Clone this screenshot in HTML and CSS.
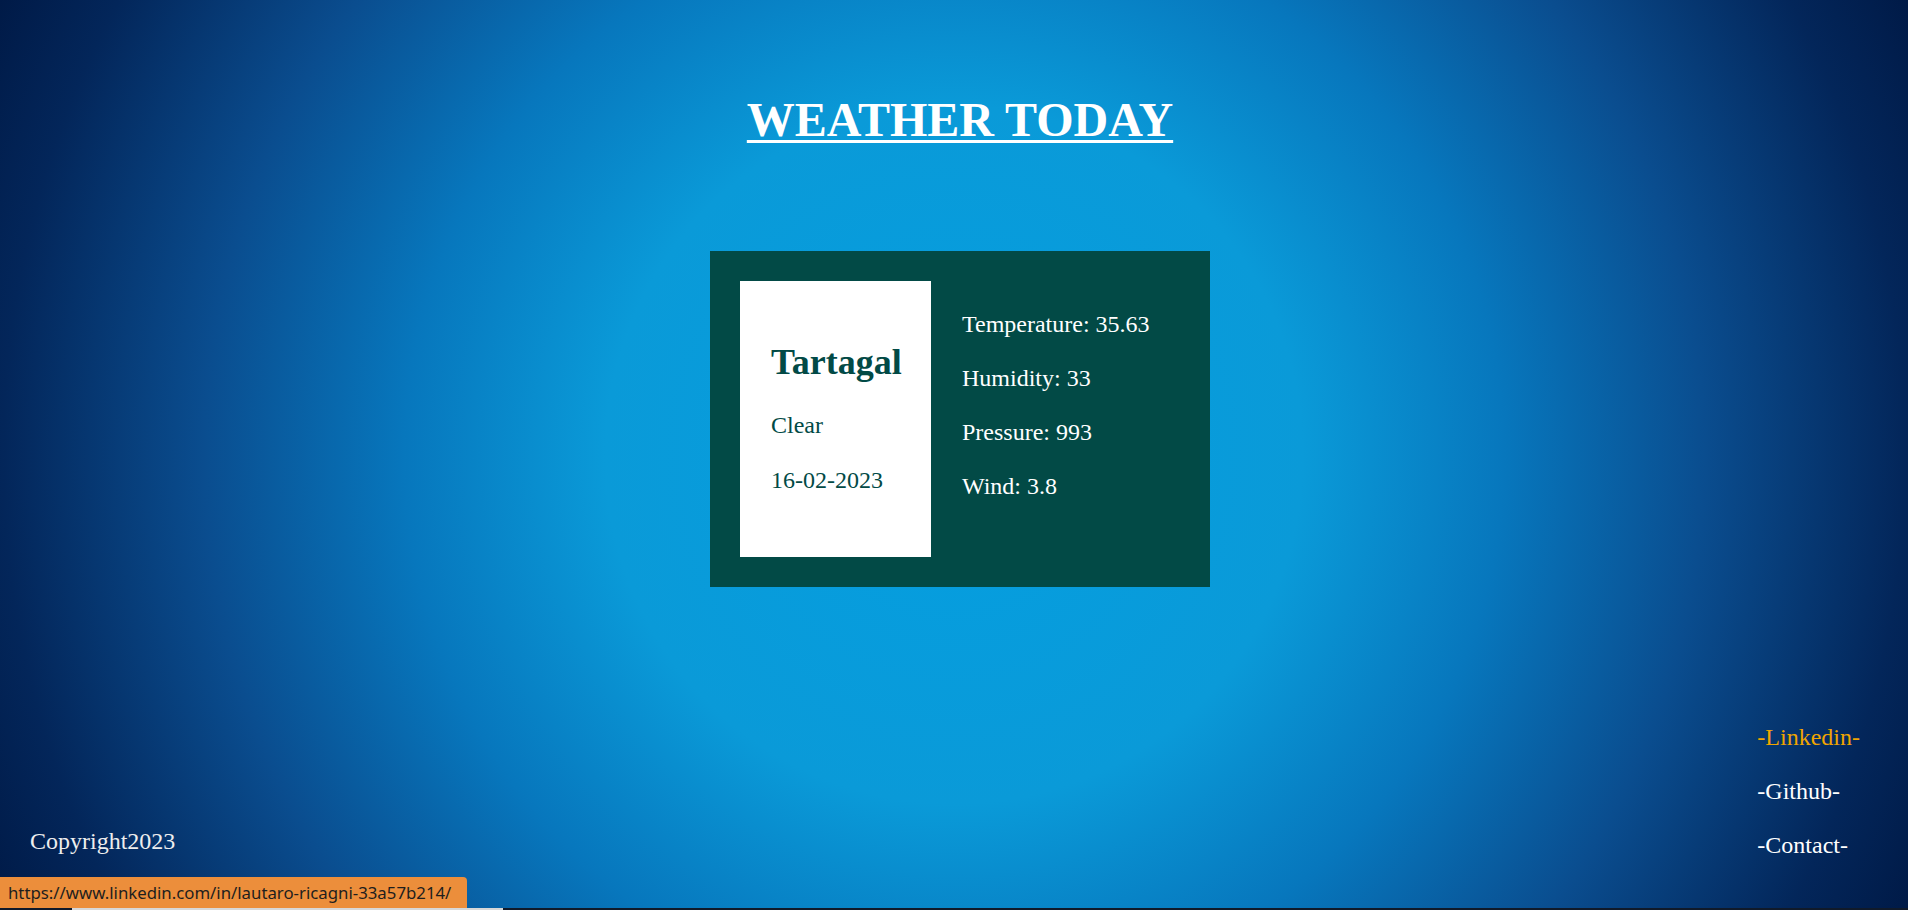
FILE: index.html
```html
<!DOCTYPE html>
<html lang="en">
<head>
<meta charset="utf-8">
<title>Weather Today</title>
<link rel="stylesheet" href="styles.css">
</head>
<body>
<div class="page">
  <header class="header">
    <h1 class="title">WEATHER TODAY</h1>
  </header>
  <main class="main">
    <section class="card">
      <div class="city-box">
        <h2 class="city">Tartagal</h2>
        <p class="line">Clear</p>
        <p class="line">16-02-2023</p>
      </div>
      <div class="stats">
        <p class="line">Temperature: 35.63</p>
        <p class="line">Humidity: 33</p>
        <p class="line">Pressure: 993</p>
        <p class="line">Wind: 3.8</p>
      </div>
    </section>
  </main>
  <footer class="footer">
    <p class="line copyright">Copyright2023</p>
    <nav class="links">
      <a class="line link link-active" href="#">-Linkedin-</a>
      <a class="line link" href="#">-Github-</a>
      <a class="line link" href="#">-Contact-</a>
    </nav>
  </footer>
</div>
<div class="statusbar">https://www.linkedin.com/in/lautaro-ricagni-33a57b214/</div>
<div class="bottom-strip"><div class="bottom-thumb"></div></div>
</body>
</html>
```

FILE: styles.css
```css
html, body {
  margin: 0;
  padding: 0;
  height: 100%;
  overflow: hidden;
}

body {
  background: radial-gradient(circle farthest-corner at 50% 50%,
    #049fe1 0%,
    #0a9ad8 33%,
    #0777bd 52%,
    #0a4d8f 71%,
    #03265a 90%,
    #001a47 100%);
  font-family: "Liberation Serif", "Times New Roman", serif;
  color: #ffffff;
}

.page {
  height: 910px;
  display: flex;
  flex-direction: column;
}

.header {
  padding-top: 93px;
  padding-left: 12px;
  display: flex;
  justify-content: center;
}

.title {
  margin: 0;
  font-size: 48px;
  line-height: 54px;
  font-weight: bold;
  color: #ffffff;
  text-decoration: underline;
  text-decoration-thickness: 3px;
  text-underline-offset: 4px;
}

.main {
  padding-left: 12px;
  padding-top: 104px;
  display: flex;
  justify-content: center;
}

.card {
  width: 500px;
  height: 336px;
  box-sizing: border-box;
  padding: 30px;
  background: #024a46;
  display: flex;
  gap: 31px;
}

.city-box {
  width: 191px;
  height: 276px;
  box-sizing: border-box;
  background: #ffffff;
  color: #024a46;
  padding: 61px 0 0 31px;
  display: flex;
  flex-direction: column;
}

.city {
  margin: 0 0 29px 0;
  font-size: 36px;
  line-height: 40px;
  font-weight: bold;
}

.line {
  margin: 0;
  font-size: 24px;
  line-height: 28px;
}

.city-box .line + .line {
  margin-top: 27px;
}

.stats {
  padding-top: 29px;
  display: flex;
  flex-direction: column;
  gap: 26px;
  color: #ffffff;
}

.footer {
  margin-top: auto;
  padding: 0 48px 51px 30px;
  display: flex;
  justify-content: space-between;
  align-items: flex-end;
}

.copyright {
  color: #eeeeee;
  margin-bottom: 4px;
}

.links {
  display: flex;
  flex-direction: column;
  gap: 26px;
}

.link {
  color: #ffffff;
  text-decoration: none;
  display: block;
}

.link-active {
  color: #f0a500;
}

.statusbar {
  position: fixed;
  left: 0;
  bottom: 2px;
  width: 467px;
  height: 31px;
  box-sizing: border-box;
  padding: 4px 0 0 8px;
  background: #ec8e3b;
  border-top-right-radius: 4px;
  color: #1e1e1e;
  font-family: "Noto Sans", "Open Sans", sans-serif;
  font-size: 16.8px;
  line-height: 23px;
  white-space: nowrap;
}

.bottom-strip {
  position: fixed;
  left: 0;
  right: 0;
  bottom: 0;
  height: 2px;
  background: #101a2a;
}

.bottom-thumb {
  margin-left: 72px;
  width: 431px;
  height: 2px;
  background: #d8d8d8;
}
```
